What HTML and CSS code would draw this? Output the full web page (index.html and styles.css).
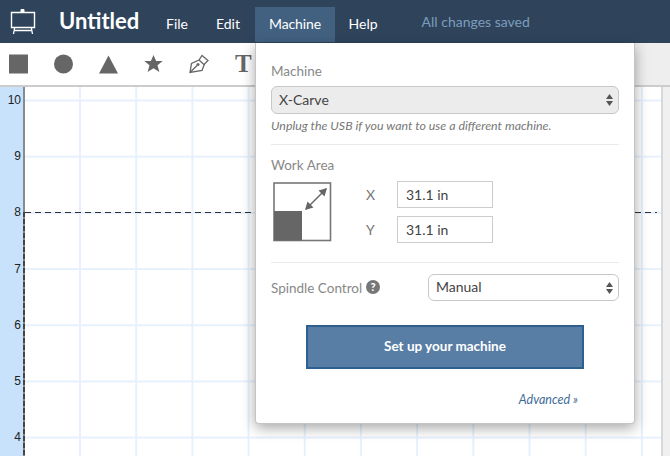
FILE: index.html
```html
<!DOCTYPE html>
<html lang="en">
<head>
  <meta charset="UTF-8" />
  <title>Untitled</title>
  <link rel="stylesheet" href="styles.css">
</head>
<body>
  <header class="topbar">
    <svg class="logo" width="26" height="28" viewBox="0 0 26 28" fill="none" stroke="#fff">
      <path d="M1.500 5.500h23v15h-23z" stroke-width="1.400"/>
      <path d="M11 5V2.500h3V5" fill="#fff" stroke-width="1"/>
      <path d="M4 23.500h18M3.500 27l1.200-6.500M22.500 27l-1.200-6.500" stroke-width="1.300"/>
    </svg>
    <h1 class="title">Untitled</h1>
    <nav class="menu">
      <a class="menu-item">File</a>
      <a class="menu-item">Edit</a>
      <a class="menu-item active">Machine</a>
      <a class="menu-item">Help</a>
    </nav>
    <span class="saved">All changes saved</span>
  </header>

  <div class="toolbar">
    <svg class="tool" width="20" height="20" viewBox="0 0 20 20"><rect width="19" height="19" y="0.5" fill="#666"/></svg>
    <svg class="tool" width="20" height="20" viewBox="0 0 20 20"><circle cx="9.5" cy="10" r="9.5" fill="#666"/></svg>
    <svg class="tool" width="20" height="20" viewBox="0 0 20 20"><path d="M9.5 1.500L19 19.500H0z" fill="#666"/></svg>
    <svg class="tool" width="20" height="20" viewBox="0 0 20 20"><path d="M9.500 1l2.600 6h6.600l-5.200 4.300 1.900 6.700-5.900-3.800L3.600 18l1.900-6.700L.3 7h6.600z" fill="#666"/></svg>
    <svg class="tool" width="20" height="20" viewBox="0 0 20 20" fill="none" stroke="#666" stroke-width="1.300"><path d="M1 18.500l1.500-9 7.500-3.500 3-4.500 6 5-3.500 3.500-2.500 6.500z"/><path d="M1 18.500L8 11.500M10 6l5.500 5"/><circle cx="9" cy="10.500" r="1.500" fill="#666" stroke="none"/></svg>
    <span class="tool-text">T</span>
    <div class="toolbar-end"></div>
  </div>

  <div class="workspace">
    <div class="ruler">
      <span class="tick">10</span>
      <span class="tick">9</span>
      <span class="tick">8</span>
      <span class="tick">7</span>
      <span class="tick">6</span>
      <span class="tick">5</span>
      <span class="tick">4</span>
    </div>
    <div class="canvas">
      <div class="axis-dash"></div>
      <div class="height-line"></div>
    </div>
    <div class="side-strip"></div>
  </div>

  <section class="popup">
    <label class="field-label">Machine</label>
    <div class="select-wrap grey">
      <select class="select"><option>X-Carve</option></select>
      <svg class="arrows" width="7" height="12" viewBox="0 0 7 12" fill="#555"><path d="M3.500 0L7 5H0zM3.500 12L0 7h7z"/></svg>
    </div>
    <p class="hint">Unplug the USB if you want to use a different machine.</p>

    <div class="group">
      <label class="field-label">Work Area</label>
      <div class="work-area">
        <svg class="area-icon" width="59" height="60" viewBox="0 0 59 60" fill="none">
          <rect x="1" y="1" width="56.500" height="57.500" stroke="#777" stroke-width="1.600"/>
          <rect x="1" y="29" width="28" height="29.500" fill="#666"/>
          <path d="M33 27L53 7" stroke="#666" stroke-width="1.500"/>
          <path d="M32 28l2.500-8.500 6 6zM54 6l-2.500 8.500-6-6z" fill="#666"/>
        </svg>
        <div class="dims">
          <div class="dim"><span class="dim-label">X</span><input class="dim-input" value="31.1 in"></div>
          <div class="dim"><span class="dim-label">Y</span><input class="dim-input" value="31.1 in"></div>
        </div>
      </div>
    </div>

    <div class="group spindle">
      <span class="field-label">Spindle Control</span>
      <span class="help">?</span>
      <div class="select-wrap spindle-select">
        <select class="select"><option>Manual</option></select>
        <svg class="arrows" width="7" height="12" viewBox="0 0 7 12" fill="#555"><path d="M3.500 0L7 5H0zM3.500 12L0 7h7z"/></svg>
      </div>
    </div>

    <button class="setup" type="button">Set up your machine</button>
    <a class="advanced">Advanced »</a>
  </section>
</body>
</html>
```

FILE: styles.css
```css
* { box-sizing: border-box; }
html, body { height: 100%; }
body {
  margin: 0;
  overflow: hidden;
  position: relative;
  display: flex;
  flex-direction: column;
  font-family: Lato, "Open Sans", sans-serif;
  font-size: 14px;
  color: #555;
  background: #fff;
}

/* top bar */
.topbar {
  height: 43px;
  flex: none;
  display: flex;
  align-items: center;
  background: #2f445b;
  color: #fff;
}
.logo { margin-left: 10px; margin-top: -1px; flex: none; }
.title { margin: 0 0 2px 23px; font-size: 22px; font-weight: 700; width: 94px; }
.menu { display: flex; height: 35px; align-self: flex-start; margin-top: 7px; margin-left: -1px; }
.menu-item { display: flex; align-items: center; padding: 0 14px 2px; }
.menu-item.active { background: #426180; padding: 0 13.500px 2px 14px; margin-left: 1px; letter-spacing: -0.100px; }
.saved { color: #7c9cbd; margin-left: 30px; }

/* tool row */
.toolbar {
  height: 44px;
  flex: none;
  display: flex;
  align-items: center;
  gap: 25px;
  padding-left: 9px;
  border-bottom: 2px solid #ccc;
  position: relative;
}
.tool { flex: none; }
.tool-text {
  font-family: "Liberation Serif", serif;
  font-weight: 700;
  font-size: 25px;
  line-height: 20px;
  color: #666;
  margin-left: 1px;
}
.toolbar-end { margin-left: auto; width: 36px; align-self: stretch; background: #eee; }

/* drawing area */
.workspace { flex: 1; display: flex; min-height: 0; overflow: hidden; }
.ruler {
  width: 25px;
  flex: none;
  padding-top: 5px;
  background: #c8e2fb;
  border-right: 2px solid #848b92;
  overflow: hidden;
}
.tick {
  display: block;
  height: 56.2px;
  line-height: 16px;
  padding-right: 2px;
  text-align: right;
  font-family: "Liberation Sans", sans-serif;
  font-size: 12px;
  color: #222;
}
.canvas {
  flex: 1;
  position: relative;
  background-color: #fff;
  background-image:
    linear-gradient(to right, #e6f1fd 2px, transparent 2px),
    linear-gradient(to bottom, #e6f1fd 2px, transparent 2px);
  background-size: 56.2px 56.2px;
  background-position: 54px 12.5px;
}
.axis-dash {
  position: absolute;
  left: -2px;
  top: 125px;
  bottom: 0;
  width: 2px;
  background: repeating-linear-gradient(to bottom, #444 0 5px, #888 5px 7px);
}
.height-line {
  position: absolute;
  left: 0;
  right: 4px;
  top: 125px;
  height: 1px;
  background: repeating-linear-gradient(to right, #333 0 6px, transparent 6px 10px);
}
.side-strip {
  width: 9px;
  flex: none;
  background: #f0f0f0;
  border-left: 2px solid #d8d8d8;
}

/* machine dropdown */
.popup {
  position: absolute;
  left: 255px;
  top: 43px;
  width: 380px;
  height: 381px;
  padding: 20px 15px 0;
  background: #fff;
  border: 1px solid #c4c4c4;
  border-top: 0;
  border-radius: 0 0 4px 4px;
  box-shadow: 0 4px 14px rgba(0, 0, 0, 0.35);
  display: flex;
  flex-direction: column;
}
.field-label { display: block; font-size: 13.500px; line-height: 16px; color: #888; }
.select-wrap {
  position: relative;
  margin-top: 7px;
  height: 28px;
  border: 1px solid #c8c8c8;
  border-radius: 6px;
  background: #fff;
}
.select-wrap.grey { background: #ececec; }
.select {
  appearance: none;
  width: 100%;
  height: 100%;
  padding: 0 7px 2px;
  border: 0;
  background: transparent;
  font: inherit;
  color: #444;
}
.arrows { position: absolute; right: 5px; top: 7px; }
.hint { margin: 4px 0 0; font-size: 12.400px; line-height: 16px; font-style: italic; color: #777; }

.group { margin-top: 10px; padding-top: 12px; border-top: 1px solid #eaeaea; }
.work-area { display: flex; margin-top: 7px; }
.area-icon { margin-left: 2px; margin-top: 2px; flex: none; }
.dims { margin-left: 34px; margin-top: 1px; display: flex; flex-direction: column; gap: 8px; }
.dim { display: flex; align-items: center; }
.dim-label { width: 31px; color: #777; }
.dim-input {
  width: 96px;
  height: 27px;
  padding: 0 8px;
  border: 1px solid #ccc;
  font: inherit;
  color: #444;
}
.spindle { display: flex; align-items: center; margin-top: 19px; padding-top: 11px; }
.help {
  width: 14px;
  height: 14px;
  margin-left: 4px;
  border-radius: 50%;
  background: #777;
  color: #fff;
  font-size: 11px;
  font-weight: 900;
  line-height: 14px;
  text-align: center;
  margin-top: -1px;
}
.spindle-select { margin: 0 0 0 auto; width: 191px; height: 27px; }

.setup {
  align-self: center;
  margin-top: 24px;
  width: 278px;
  height: 44px;
  background: #587ea5;
  border: 2px solid #2d5f8f;
  color: #fff;
  font: 700 13.500px Lato, sans-serif;
  padding-bottom: 3px;
}
.advanced {
  align-self: flex-end;
  margin: 23px 41px 0 0;
  font-size: 12.500px;
  line-height: 16px;
  font-style: italic;
  color: #3f6b9a;
}
```
